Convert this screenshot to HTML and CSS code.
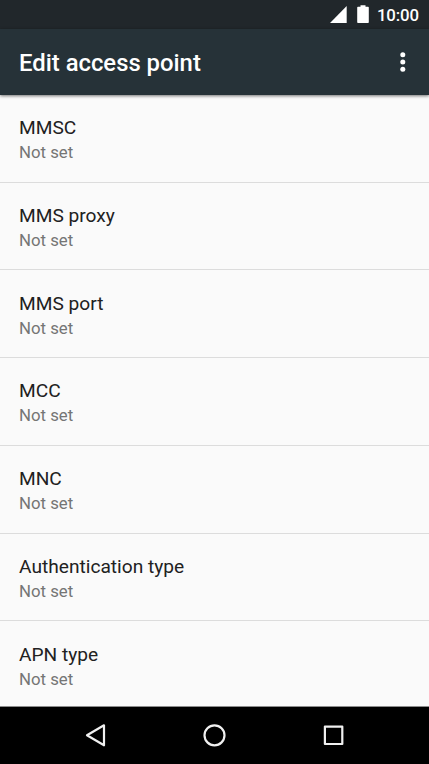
FILE: index.html
```html
<!DOCTYPE html>
<html lang="en">
<head>
<meta charset="utf-8">
<title>Edit access point</title>
<link rel="stylesheet" href="styles.css">
</head>
<body>
<div class="screen">
  <div class="status-bar">
    <svg class="signal" width="17" height="17" viewBox="0 0 17 17"><path d="M0 17H16.700V0Z"/></svg>
    <svg class="battery" width="12" height="18" viewBox="0 0 12 18"><path d="M3.500 0.300h5v1.500H11q.8 0 .8.8v14.600q0 .8-.8.8H1q-.8 0-.8-.8V2.600q0-.8.8-.8h2.500z"/></svg>
    <span class="clock">10:00</span>
  </div>
  <header class="app-bar">
    <h1>Edit access point</h1>
    <svg class="more" width="6" height="20" viewBox="0 0 6 20"><circle cx="2.800" cy="2.800" r="2.500"/><circle cx="2.800" cy="10" r="2.500"/><circle cx="2.800" cy="17.200" r="2.500"/></svg>
  </header>
  <main class="list">
    <div class="row"><div class="title">MMSC</div><div class="value">Not set</div></div>
    <div class="row"><div class="title">MMS proxy</div><div class="value">Not set</div></div>
    <div class="row"><div class="title">MMS port</div><div class="value">Not set</div></div>
    <div class="row"><div class="title">MCC</div><div class="value">Not set</div></div>
    <div class="row"><div class="title">MNC</div><div class="value">Not set</div></div>
    <div class="row"><div class="title">Authentication type</div><div class="value">Not set</div></div>
    <div class="row"><div class="title">APN type</div><div class="value">Not set</div></div>
  </main>
  <nav class="nav-bar">
    <svg width="24" height="24" viewBox="0 0 24 24"><path d="M20 2.300V22.300L3 12.300Z"/></svg>
    <svg width="24" height="24" viewBox="0 0 24 24"><circle cx="11.500" cy="12.300" r="10"/></svg>
    <svg width="24" height="24" viewBox="0 0 24 24"><rect x="2.900" y="3.600" width="17.400" height="17.400"/></svg>
  </nav>
</div>
</body>
</html>
```
FILE: styles.css
```css
* { box-sizing: border-box; }
body { margin: 0; font-family: Roboto, sans-serif; }
.screen { width: 429px; height: 764px; display: flex; flex-direction: column; background: #fafafa; overflow: hidden; }
.status-bar { flex: none; height: 29px; padding: 0 10px 1px 0; background: #21272b; display: flex; align-items: center; justify-content: flex-end; color: #fff; fill: #fff; }
.signal { margin-right: 10px; }
.battery { margin-right: 8px; }
.clock { margin-top: 2px; font-size: 16.800px; font-weight: 500; line-height: 28px; letter-spacing: -0.100px; }
.app-bar { flex: none; height: 66px; background: #263238; color: #fff; fill: #fff; display: flex; align-items: center; justify-content: space-between; padding: 0 23px 0 19px; border-bottom: 1px solid #263238; box-shadow: 0 1px 3px rgba(0,0,0,.55); z-index: 1; }
h1 { margin: 2px 0 0; font-size: 23.850px; font-weight: 500; }
.list { flex: 1; min-height: 0; overflow: hidden; }
.row { height: 87.720px; padding: 21.200px 19px 0; border-bottom: 1px solid #dcdcdc; }
.title { font-size: 19.150px; line-height: 24px; color: #212121; }
.value { font-size: 16.800px; line-height: 24px; color: #757575; }
.nav-bar { flex: none; height: 58px; padding-bottom: 1px; background: #000; border-top: 1px solid #8c8c8c; display: flex; align-items: center; justify-content: center; gap: 95px; fill: none; stroke: #f0f0f0; stroke-width: 2.200; stroke-linejoin: round; }
```
